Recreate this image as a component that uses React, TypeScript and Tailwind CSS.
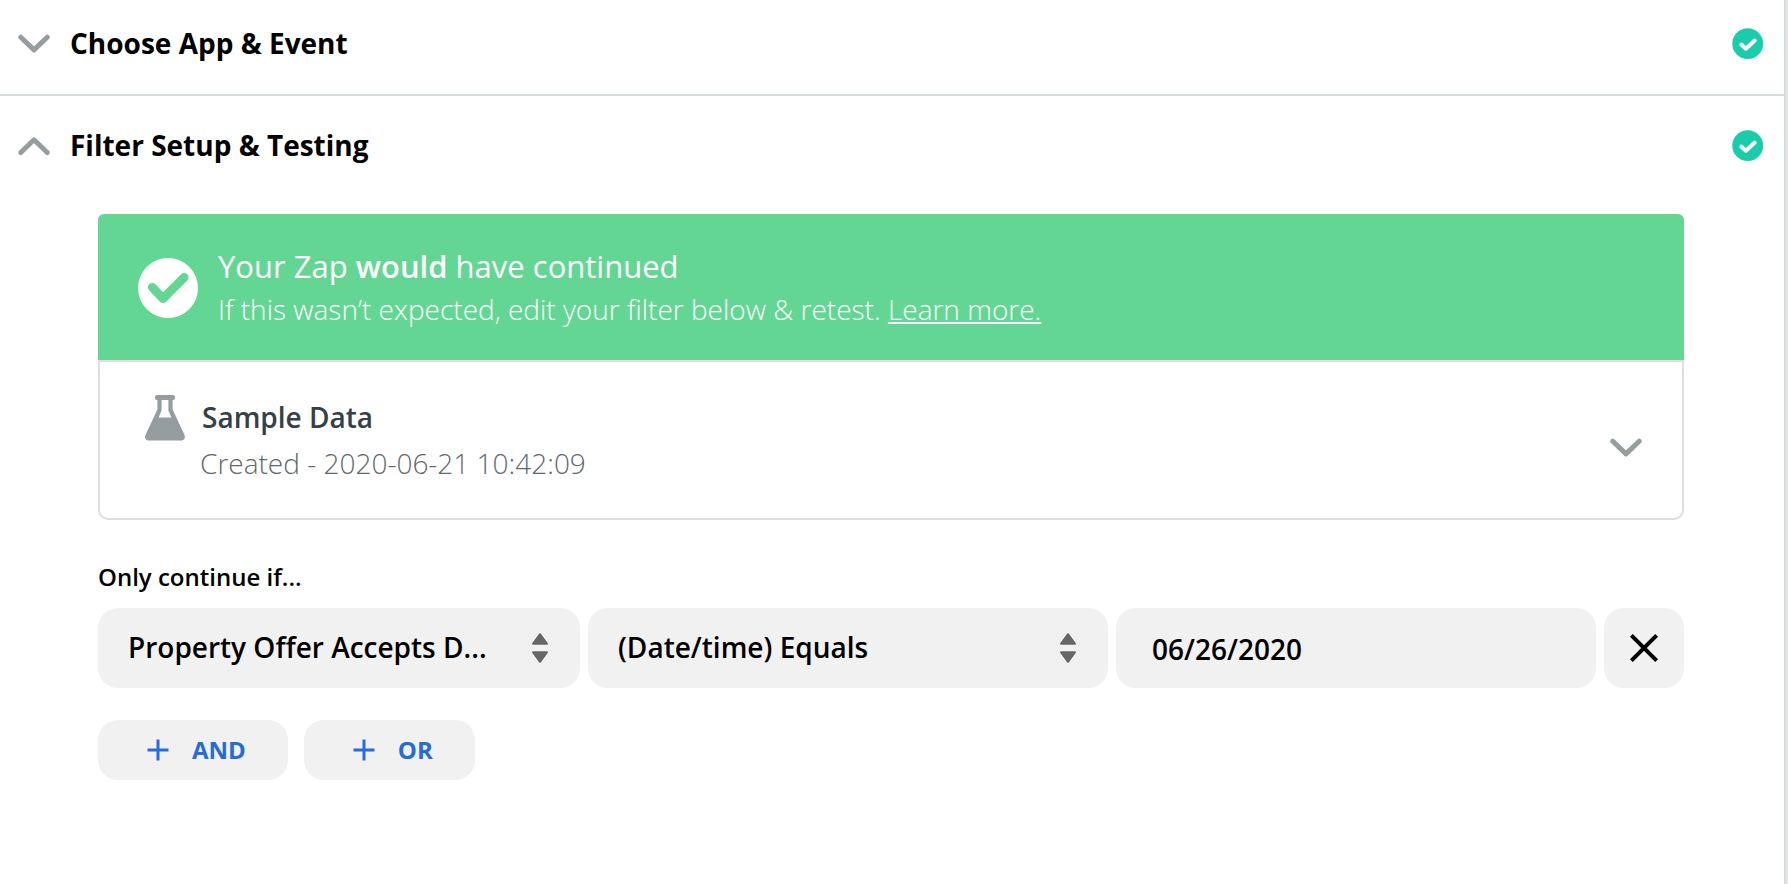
import { useState } from "react";

function Chevron({ up = false }: { up?: boolean }) {
  return (
    <svg width="32" height="20" viewBox="0 0 32 20" fill="none" stroke="#959da0" strokeWidth="5" strokeLinecap="round" strokeLinejoin="round" aria-hidden="true">
      <path d={up ? "M2.8 16.5 16 3.8 29.2 16.5" : "M2.8 3.2 16 15.9 29.2 3.2"} />
    </svg>
  );
}

function StatusCheck() {
  return (
    <svg width="32" height="32" viewBox="0 0 32 32" fill="none" role="img" aria-label="Complete">
      <circle cx="15.7" cy="15.7" r="15.4" fill="#19cdac" />
      <path d="m9.3 16.5 4.6 4.2 8.8-8.2" stroke="#fff" strokeWidth="4" strokeLinecap="round" strokeLinejoin="round" />
    </svg>
  );
}

function BannerCheck() {
  return (
    <svg width="60" height="60" viewBox="0 0 60 60" fill="none" className="shrink-0" aria-hidden="true">
      <circle cx="30" cy="30" r="30" fill="#fff" />
      <path d="M14.3 29.3 25 40.6 46.2 19.3" stroke="#64d694" strokeWidth="8.8" strokeLinecap="round" strokeLinejoin="round" />
    </svg>
  );
}

function Flask() {
  return (
    <svg width="42" height="46" viewBox="0 0 42 46" fill="#959da0" aria-hidden="true">
      <path
        fillRule="evenodd"
        d="M13 0H29A2 2 0 0 1 31 2V3A2 2 0 0 1 29 5H28.6V14.5L40.3 39.5C41.8 43 40.4 45.5 37 45.5H5C1.6 45.5.2 43 1.7 39.5L13.4 14.5V5H13A2 2 0 0 1 11 3V2A2 2 0 0 1 13 0ZM17.6 5V15.5L14.6 22.4H27.4L24.4 15.5V5Z"
      />
    </svg>
  );
}

function Sorter() {
  return (
    <svg width="16" height="30" viewBox="0 0 16 30" fill="#666" stroke="#666" strokeWidth="2" strokeLinejoin="round" aria-hidden="true">
      <path d="M8 1.2 15 10.8H1Z" />
      <path d="M8 28.8 15 19.2H1Z" />
    </svg>
  );
}

function Plus() {
  return (
    <svg width="22" height="22" viewBox="0 0 22 22" fill="none" stroke="#276be0" strokeWidth="3" aria-hidden="true">
      <path d="M11 0.5V21.5M0.5 11H21.5" />
    </svg>
  );
}

function SectionHeader({ title, open, onToggle }: { title: string; open: boolean; onToggle: () => void }) {
  return (
    <button type="button" aria-expanded={open} onClick={onToggle} className="flex w-full items-center gap-5 pr-5 pl-[18px] text-left">
      <Chevron up={open} />
      <span className="flex-1 pb-0.5 text-[28px] leading-[38px] font-bold">{title}</span>
      <StatusCheck />
    </button>
  );
}

function Dropdown({ label, options }: { label: string; options: string[] }) {
  return (
    <div className="relative">
      <select aria-label={label} className="h-20 w-full appearance-none rounded-[20px] bg-[#f1f1f1] pr-16 pb-0.5 pl-[30px] text-[28px] leading-10 font-semibold">
        {options.map((option) => (
          <option key={option}>{option}</option>
        ))}
      </select>
      <span className="pointer-events-none absolute inset-y-0 right-8 flex items-center">
        <Sorter />
      </span>
    </div>
  );
}

function AddButton({ label }: { label: string }) {
  return (
    <button type="button" className="flex h-[60px] items-center gap-[23px] rounded-[20px] bg-[#f1f1f1] pr-[42px] pl-[49px] text-2xl font-bold text-[#276bd4]">
      <Plus />
      {label}
    </button>
  );
}

export default function App() {
  const [eventOpen, setEventOpen] = useState(false);
  const [filterOpen, setFilterOpen] = useState(true);

  return (
    <div className="flex min-h-screen bg-white font-['Open_Sans',sans-serif] text-black">
      <main className="min-w-0 flex-1">
        <section className="border-b-2 border-[#d8dedf] pt-6 pb-[30px]">
          <SectionHeader title="Choose App & Event" open={eventOpen} onToggle={() => setEventOpen(!eventOpen)} />
        </section>

        <section className="pt-[30px]">
          <SectionHeader title="Filter Setup & Testing" open={filterOpen} onToggle={() => setFilterOpen(!filterOpen)} />

          {filterOpen && (
            <div className="mt-12 mr-[100px] ml-[98px]">
              <div className="flex items-center gap-5 rounded-t-md bg-[#64d694] px-10 pt-[30px] pb-7 text-white">
                <BannerCheck />
                <div className="pb-0.5">
                  <h2 className="text-[31px] leading-[44px] font-medium">
                    Your Zap <strong className="font-semibold">would</strong> have continued
                  </h2>
                  <p className="text-[28px] leading-[42px] font-light">
                    If this wasn’t expected, edit your filter below &amp; retest.{" "}
                    <a href="#learn-more" className="underline">Learn more.</a>
                  </p>
                </div>
              </div>

              <div className="flex items-center justify-between rounded-b-[10px] border-2 border-[#dadfe1] py-[33px] pr-10 pl-11">
                <div>
                  <div className="flex items-start gap-4">
                    <Flask />
                    <h3 className="text-[28px] leading-[44px] font-semibold text-[#354047]">Sample Data</h3>
                  </div>
                  <p className="pl-14 text-[28px] leading-[44px] font-light text-[#5f696d]">Created - 2020-06-21 10:42:09</p>
                </div>
                <button type="button" aria-label="Show sample data" className="pt-4">
                  <Chevron />
                </button>
              </div>

              <h3 className="mt-10 text-2xl leading-[34px] font-semibold">Only continue if...</h3>

              <div className="mt-[14px] grid grid-cols-[482fr_520fr_480fr_80px] gap-2">
                <Dropdown label="Field" options={["Property Offer Accepts D..."]} />
                <Dropdown label="Condition" options={["(Date/time) Equals"]} />
                <input
                  type="text"
                  aria-label="Value"
                  defaultValue="06/26/2020"
                  className="h-20 w-full min-w-0 rounded-[20px] bg-[#f1f1f1] px-9 pt-0.5 text-[28px] font-semibold"
                />
                <button type="button" aria-label="Remove condition" className="flex h-20 items-center justify-center rounded-[20px] bg-[#f1f1f1]">
                  <svg width="28" height="28" viewBox="0 0 28 28" fill="none" stroke="#000" strokeWidth="4" aria-hidden="true">
                    <path d="m1.4 1.4 25.2 25.2M26.6 1.4 1.4 26.6" />
                  </svg>
                </button>
              </div>

              <div className="mt-8 flex gap-4">
                <AddButton label="AND" />
                <AddButton label="OR" />
              </div>
            </div>
          )}
        </section>
      </main>
      <div className="w-1 border-l-2 border-[#d5dddc] bg-[#e2e8e5]" />
    </div>
  );
}
